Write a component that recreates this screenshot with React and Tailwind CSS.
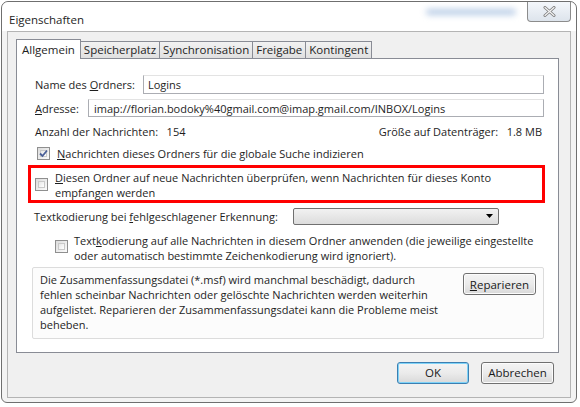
import React from 'react';

const font = "font-['Open_Sans',sans-serif]";

const CheckBox = ({ checked }) => (
  <span className="w-[13px] h-[13px] shrink-0 border border-[#8f8f8f] bg-gradient-to-br from-[#dcdcdc] to-[#fbfbfb] p-[2px] flex items-center justify-center">
    <span className="w-full h-full border border-[#c9c9c9] bg-gradient-to-br from-[#e6e6e6] to-[#ffffff] flex items-center justify-center">
      {checked && (
        <svg width="9" height="9" viewBox="0 0 9 9" className="-m-[2px]">
          <path d="M1 4.5 L3.5 7 L8 1.5" fill="none" stroke="#4a5f97" strokeWidth="1.8" />
        </svg>
      )}
    </span>
  </span>
);

const Button = ({ children, primary, className = '' }) => (
  <button
    className={`h-[22px] rounded-[3px] border text-[11.5px] text-[#1a1a1a] bg-gradient-to-b from-[#f4f4f4] via-[#ebebeb] to-[#d9d9d9] ${
      primary ? 'border-[#3c7fb1] shadow-[inset_0_0_0_1px_#7fd3f8]' : 'border-[#707070] shadow-[inset_0_0_0_1px_#fcfcfc]'
    } ${className}`}
  >
    {children}
  </button>
);

const tabs = ['Allgemein', 'Speicherplatz', 'Synchronisation', 'Freigabe', 'Kontingent'];

export default function App() {
  return (
    <div className={`w-[580px] h-[407px] bg-white text-[#1e1e1e] overflow-hidden ${font}`}>
      <div className="ml-[1px] mt-[1px] w-[576px] h-[402px] border border-[#6f6f6f] rounded-t-[7px] rounded-b-[6px] bg-[#f3f3f3] flex flex-col">
        {/* title bar */}
        <div className="h-[29px] flex justify-between items-start bg-white rounded-t-[7px] relative">
          <span className="text-[11.5px] mt-[9px] ml-[7px]">Eigenschaften</span>
          <div className="absolute right-[60px] top-[7px] w-[90px] h-[6px] rounded-full bg-[#b9cde6] blur-[3px]" />
          <div className="w-[44px] h-[20px] mr-[5px] border border-t-0 border-[#8c8c8c] rounded-b-[4px] bg-gradient-to-b from-[#f4f7fb] to-[#dde4ec] flex items-center justify-center">
            <svg width="13" height="11" viewBox="0 0 13 11">
              <path d="M2 1.5 L11 9.5 M11 1.5 L2 9.5" stroke="#7d7d7d" strokeWidth="3" strokeLinecap="round" />
              <path d="M2 1.5 L11 9.5 M11 1.5 L2 9.5" stroke="#f5f5f5" strokeWidth="1.2" strokeLinecap="round" />
            </svg>
          </div>
        </div>

        {/* client area */}
        <div className="mx-[5px] mb-[4px] flex-1 border border-[#b4b4b4] bg-[#f0f0f0] flex flex-col">
          <div className="pl-[8px] pr-[11px] pt-[7px]">
            <div className="flex items-end h-[19px]">
              {tabs.map((t, i) =>
                i === 0 ? (
                  <div
                    key={t}
                    className="relative z-10 h-[20px] -mb-[1px] px-[5px] border border-b-0 border-[#898c95] bg-white text-[11.5px] flex items-center"
                  >
                    {t}
                  </div>
                ) : (
                  <div
                    key={t}
                    className="h-[17px] px-[3px] border border-l-0 border-b-0 border-[#898c95] bg-gradient-to-b from-[#f2f2f2] to-[#e0e0e0] text-[11.5px] flex items-center"
                  >
                    {t}
                  </div>
                )
              )}
            </div>

            {/* tab panel */}
            <div className="h-[295px] border border-[#898c95] bg-white pl-[18px] pr-[14px] text-[11px] leading-[15px] whitespace-nowrap">
              <div className="mt-[16px] h-[19px] flex items-center">
                <span className="w-[108px]">Name des <u>O</u>rdners:</span>
                <div className="flex-1 h-[19px] border border-[#abadb3] border-t-[#e3e3e3] px-[4px] flex items-center">Logins</div>
              </div>
              <div className="mt-[5px] h-[18px] flex items-center">
                <span className="w-[53px]"><u>A</u>dresse:</span>
                <div className="flex-1 h-[18px] border border-[#abadb3] border-t-[#e3e3e3] px-[5px] flex items-center">
                  imap://florian.bodoky%40gmail.com@imap.gmail.com/INBOX/Logins
                </div>
              </div>
              <div className="mt-[6px] h-[16px] flex items-center justify-between">
                <span>Anzahl der Nachrichten:&nbsp;&nbsp; 154</span>
                <span className="mr-[2px]">Größe auf Datenträger:&nbsp;&nbsp; 1.8 MB</span>
              </div>
              <div className="mt-[6px] h-[16px] flex items-center gap-[7px] pl-[2px]">
                <CheckBox checked />
                <span><u>N</u>achrichten dieses Ordners für die globale Suche indizieren</span>
              </div>

              <div className="mt-[4px] -ml-[7px] mr-[-1px] h-[38px] border-[3px] border-[#ff0000] flex items-start pt-[2px] pl-[4px]">
                <div className="mt-[8px]">
                  <CheckBox />
                </div>
                <span className="ml-[7px] leading-[15px]">
                  <u>D</u>iesen Ordner auf neue Nachrichten überprüfen, wenn Nachrichten für dieses Konto
                  <br />
                  empfangen werden
                </span>
              </div>

              <div className="mt-[5px] h-[16px] flex items-center -ml-[1px]">
                <span className="w-[259px]">Textkodierung bei <u>f</u>ehlgeschlagener Erkennung:</span>
                <div className="w-[206px] h-[17px] border border-[#707070] rounded-[2px] bg-gradient-to-b from-[#f2f2f2] to-[#dcdcdc] flex justify-end items-center pr-[5px]">
                  <svg width="7" height="4" viewBox="0 0 7 4">
                    <path d="M0 0 L7 0 L3.5 4 Z" fill="#000" />
                  </svg>
                </div>
              </div>

              <div className="mt-[9px] flex items-start pl-[20px]">
                <div className="mt-[7px]">
                  <CheckBox />
                </div>
                <span className="ml-[6px] leading-[15px]">
                  Text<u>k</u>odierung auf alle Nachrichten in diesem Ordner anwenden (die jeweilige eingestellte
                  <br />
                  oder automatisch bestimmte Zeichenkodierung wird ignoriert).
                </span>
              </div>

              <div className="mt-[4px] -ml-[3px] mr-[0px] h-[72px] border border-[#dcdcdc] rounded-[2px] bg-[#fcfcfc] flex justify-between pl-[7px] pr-[7px] pt-[4px]">
                <p className="leading-[15px]">
                  Die Zusammenfassungsdatei (*.msf) wird manchmal beschädigt, dadurch
                  <br />
                  fehlen scheinbar Nachrichten oder gelöschte Nachrichten werden weiterhin
                  <br />
                  aufgelistet. Reparieren der Zusammenfassungsdatei kann die Probleme meist
                  <br />
                  beheben.
                </p>
                <Button className="w-[73px] mt-[1px]">
                  <u>R</u>eparieren
                </Button>
              </div>
            </div>
          </div>

          <div className="mt-[9px] flex justify-end gap-[12px] pr-[16px]">
            <Button primary className="w-[72px]">OK</Button>
            <Button className="w-[73px]">Abbrechen</Button>
          </div>
        </div>
      </div>
    </div>
  );
}
